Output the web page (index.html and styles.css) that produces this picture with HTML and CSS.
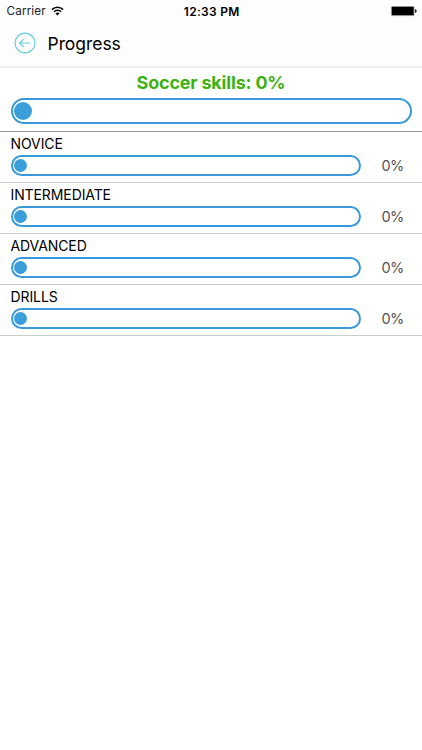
FILE: index.html
```html
<!DOCTYPE html>
<html lang="en">
<head>
    <meta charset="UTF-8">
    <meta name="viewport" content="width=device-width, initial-scale=1.0">
    <title>Progress</title>
    <link rel="stylesheet" href="styles.css">
</head>
<body>
    <div class="status-bar">
        <div class="carrier">
            <span class="carrier-name">Carrier</span>
            <svg class="wifi" width="13" height="10" viewBox="0 0 13 10">
                <path d="M0.9 3.6a8 8 0 0 1 11.2 0" fill="none" stroke="#000" stroke-width="1.6"/>
                <path d="M2.9 5.7a5.1 5.1 0 0 1 7.2 0" fill="none" stroke="#000" stroke-width="1.5"/>
                <path d="M4.5 7.4a2.9 2.9 0 0 1 4 0L6.5 9.5z" fill="#000"/>
            </svg>
        </div>
        <span class="clock">12:33 PM</span>
        <svg class="battery" width="26" height="11" viewBox="0 0 26 11">
            <rect x="0.4" y="0.4" width="22.6" height="9.2" rx="1.2" fill="#000" stroke="#999" stroke-width="0.8"/>
            <path d="M24.3 3.6a1.6 1.6 0 0 1 0 3z" fill="#000" stroke="#000" stroke-width="0.6"/>
        </svg>
    </div>

    <header>
        <a href="#" class="back">
            <svg width="22" height="22" viewBox="0 0 22 22" fill="none" stroke="#62cddc" stroke-width="1.2">
                <circle cx="11" cy="11" r="9.9"/>
                <path d="M16.3 11H5.8M9.6 7.1L5.6 11l4 3.9"/>
            </svg>
        </a>
        <h1>Progress</h1>
    </header>

    <section class="total">
        <h2>Soccer skills: 0%</h2>
        <div class="bar bar-large"><div class="fill"></div></div>
    </section>

    <ul class="levels">
        <li>
            <div class="level-name">NOVICE</div>
            <div class="level-row">
                <div class="bar"><div class="fill"></div></div>
                <span class="percent">0%</span>
            </div>
        </li>
        <li>
            <div class="level-name">INTERMEDIATE</div>
            <div class="level-row">
                <div class="bar"><div class="fill"></div></div>
                <span class="percent">0%</span>
            </div>
        </li>
        <li>
            <div class="level-name">ADVANCED</div>
            <div class="level-row">
                <div class="bar"><div class="fill"></div></div>
                <span class="percent">0%</span>
            </div>
        </li>
        <li>
            <div class="level-name">DRILLS</div>
            <div class="level-row">
                <div class="bar"><div class="fill"></div></div>
                <span class="percent">0%</span>
            </div>
        </li>
    </ul>
</body>
</html>
```
FILE: styles.css
```css
* {
    box-sizing: border-box;
}

body {
    margin: 0;
    font-family: Inter, 'Liberation Sans', sans-serif;
    background-color: #fff;
    color: #000;
}

.status-bar {
    display: grid;
    grid-template-columns: 1fr auto 1fr;
    align-items: center;
    height: 22px;
    padding: 0 5px 0 6.5px;
    background-color: #fdfdfd;
}

.carrier {
    display: flex;
    align-items: center;
    gap: 5px;
    font-size: 11.7px;
    color: #222;
}

.carrier-name {
    letter-spacing: 0.15px;
}

.clock {
    font-size: 12px;
    font-weight: 600;
    letter-spacing: 0.3px;
}

.battery {
    justify-self: end;
}

header {
    display: flex;
    align-items: center;
    height: 46px;
    padding: 0 14px 2px;
    background-color: #fdfdfd;
    border-bottom: 2px solid #efefef;
}

.back {
    display: flex;
    margin-right: 11.5px;
}

h1 {
    margin: 0;
    font-size: 17.5px;
    font-weight: 400;
    letter-spacing: -0.05px;
}

.total {
    height: 64px;
    padding: 3px 10.5px 0;
    border-bottom: 1px solid #999;
}

h2 {
    margin: 0 0 3px;
    font-size: 18px;
    font-weight: 700;
    line-height: 24px;
    letter-spacing: -0.2px;
    text-align: center;
    color: #3fb211;
}

.bar {
    width: 350px;
    height: 21px;
    padding: 2px 1.5px;
    border: 2px solid #3a9ad9;
    border-radius: 11px;
}

.fill {
    width: 13px;
    height: 13px;
    border-radius: 50%;
    background-color: #3a9edb;
}

.bar-large {
    width: 401px;
    height: 26px;
    border-radius: 13px;
}

.bar-large .fill {
    width: 18px;
    height: 18px;
}

.levels {
    margin: 0;
    padding: 0;
    list-style: none;
}

.levels li {
    height: 51px;
    padding: 2px 10.5px 0;
    border-bottom: 1px solid #ccc;
}

.level-name {
    margin-bottom: 1px;
    font-size: 14px;
    line-height: 20px;
    letter-spacing: -0.1px;
}

.level-row {
    display: flex;
    align-items: center;
}

.percent {
    margin-left: 21px;
    padding-top: 1px;
    font-size: 14.5px;
    line-height: 18px;
    letter-spacing: -0.7px;
    color: #555;
}
```
